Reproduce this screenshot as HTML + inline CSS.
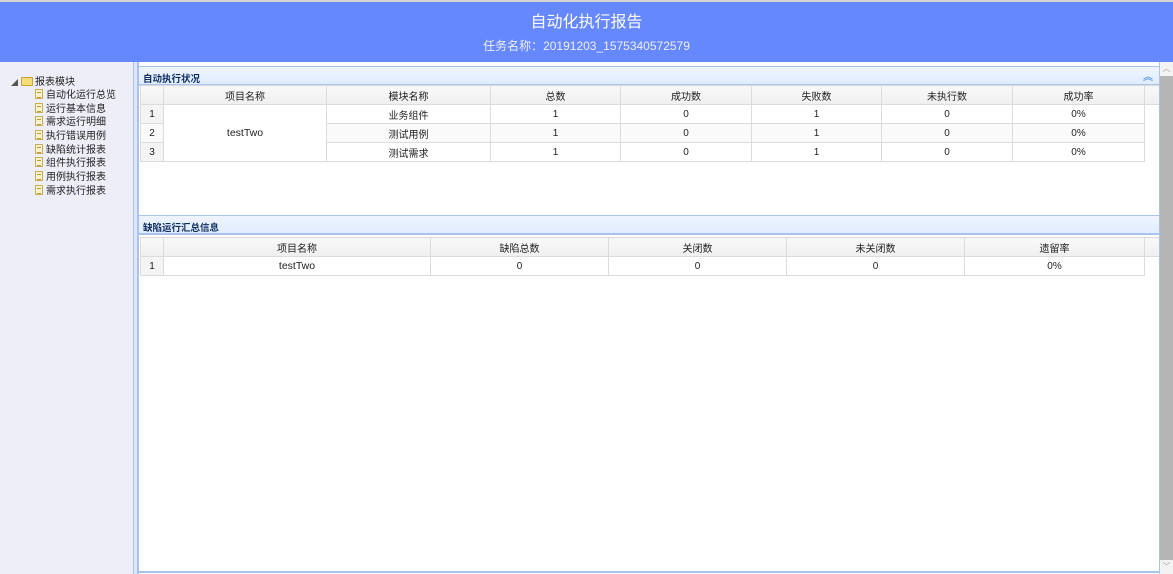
<!DOCTYPE html>
<html><head><meta charset="utf-8">
<style>
*{box-sizing:border-box;margin:0;padding:0}
body{width:1173px;height:574px;overflow:hidden;background:#fff;font-family:"Liberation Sans","Noto Sans CJK SC",sans-serif;position:relative;font-size:10px;color:#222}
.abs{position:absolute}
#hd{left:0;top:0;width:1173px;height:62px;background:#6688ff;border-top:2px solid #d6d6d6;color:#fff;text-align:center}
#hd .t{position:absolute;left:0;right:0;top:6px;font-size:16px}
#hd .s{position:absolute;left:0;right:0;top:35px;font-size:12px;color:#eef}
#left{left:0;top:62px;width:134px;height:512px;background:#eeeef8;border-right:1px solid #a9c3ea}
#split{left:134px;top:62px;width:5px;height:512px;background:#dfe7f6;border-right:2px solid #a8c4ec}
.tree{position:absolute;font-size:10px;color:#222;white-space:nowrap}
.doc{display:inline-block;width:8px;height:10px;background:#fbf3c8;border:1px solid #c9ae5a;vertical-align:-1px;margin-right:3px;position:relative}
.doc:after{content:"";position:absolute;left:1px;top:2px;width:4px;height:4px;border-top:1px solid #b99a44;border-bottom:1px solid #b99a44}
.fold{display:inline-block;width:12px;height:9px;background:#f7dc7a;border:1px solid #c9a23a;border-radius:1px;vertical-align:-1px;margin-right:2px}
.ph{position:absolute;left:139px;width:1020px;height:20px;background:linear-gradient(#eff5ff,#e0ecff);border-top:1px solid #a8c4ec;border-bottom:2px solid #a8c4ec;font-weight:bold;font-size:9.5px;color:#0e2d5f;padding:4px 0 0 4px}
table{position:absolute;border-collapse:collapse;table-layout:fixed;font-size:10px}
td{border:1px solid #dcdcdc;text-align:center;height:19px;padding:0;overflow:hidden}
tr.h td{background:linear-gradient(#f9f9f9,#efefef);height:19px}
td.n{background:#f4f4f4;border-color:#dcdcdc}
tr.alt td{background:#fafafa}
#sb{left:1159px;top:62px;width:14px;height:512px;background:#b5b5b5;border-left:1px solid #a8c4ec}
</style></head><body>
<div id="hd" class="abs"><div class="t">自动化执行报告</div><div class="s">任务名称：20191203_1575340572579</div></div>
<div id="left" class="abs"></div>
<div id="split" class="abs"></div>
<div class="tree" style="left:11px;top:73px"><span style="font-size:7px;color:#555;margin-right:3px">◢</span><span class="fold"></span>报表模块</div>
<div class="tree" style="left:35px;top:86px"><span class="doc"></span>自动化运行总览</div>
<div class="tree" style="left:35px;top:100px"><span class="doc"></span>运行基本信息</div>
<div class="tree" style="left:35px;top:113px"><span class="doc"></span>需求运行明细</div>
<div class="tree" style="left:35px;top:127px"><span class="doc"></span>执行错误用例</div>
<div class="tree" style="left:35px;top:141px"><span class="doc"></span>缺陷统计报表</div>
<div class="tree" style="left:35px;top:154px"><span class="doc"></span>组件执行报表</div>
<div class="tree" style="left:35px;top:168px"><span class="doc"></span>用例执行报表</div>
<div class="tree" style="left:35px;top:182px"><span class="doc"></span>需求执行报表</div>

<div class="abs" style="left:139px;top:62px;width:1020px;height:4px;background:#fff"></div>
<div class="ph" style="top:66px">自动执行状况<span style="position:absolute;right:6px;top:1px;color:#5a9be0;font-size:10px">︽</span></div>
<table style="left:140px;top:85px;width:1018px">
<colgroup><col style="width:23px"><col style="width:163px"><col style="width:164px"><col style="width:130px"><col style="width:131px"><col style="width:130px"><col style="width:131px"><col style="width:132px"><col style="width:14px"></colgroup>
<tr class="h"><td></td><td>项目名称</td><td>模块名称</td><td>总数</td><td>成功数</td><td>失败数</td><td>未执行数</td><td>成功率</td><td style="border-right:none"></td></tr>
<tr><td class="n">1</td><td rowspan="3" style="background:#fff;font-size:10.5px">testTwo</td><td>业务组件</td><td>1</td><td>0</td><td>1</td><td>0</td><td>0%</td><td style="border:none;background:#fff"></td></tr>
<tr class="alt"><td class="n">2</td><td>测试用例</td><td>1</td><td>0</td><td>1</td><td>0</td><td>0%</td><td style="border:none;background:#fff"></td></tr>
<tr><td class="n">3</td><td>测试需求</td><td>1</td><td>0</td><td>1</td><td>0</td><td>0%</td><td style="border:none;background:#fff"></td></tr>
</table>

<div class="ph" style="top:215px">缺陷运行汇总信息</div>
<table style="left:140px;top:237px;width:1018px">
<colgroup><col style="width:23px"><col style="width:267px"><col style="width:178px"><col style="width:178px"><col style="width:178px"><col style="width:180px"><col style="width:14px"></colgroup>
<tr class="h"><td></td><td>项目名称</td><td>缺陷总数</td><td>关闭数</td><td>未关闭数</td><td>遗留率</td><td style="border-right:none"></td></tr>
<tr><td class="n">1</td><td style="font-size:10.5px">testTwo</td><td>0</td><td>0</td><td>0</td><td>0%</td><td style="border:none"></td></tr>
</table>

<div class="abs" style="left:139px;top:571px;width:1020px;height:3px;border-top:2px solid #a8c4ec"></div>
<div id="sb" class="abs">
<div style="position:absolute;left:0;top:0;width:13px;height:14px;background:#f3f3f3;color:#999;font-size:8px;text-align:center;line-height:14px">︿</div>
<div style="position:absolute;left:0;bottom:0;width:13px;height:14px;background:#f3f3f3;color:#999;font-size:8px;text-align:center;line-height:14px">﹀</div>
</div>
</body></html>
